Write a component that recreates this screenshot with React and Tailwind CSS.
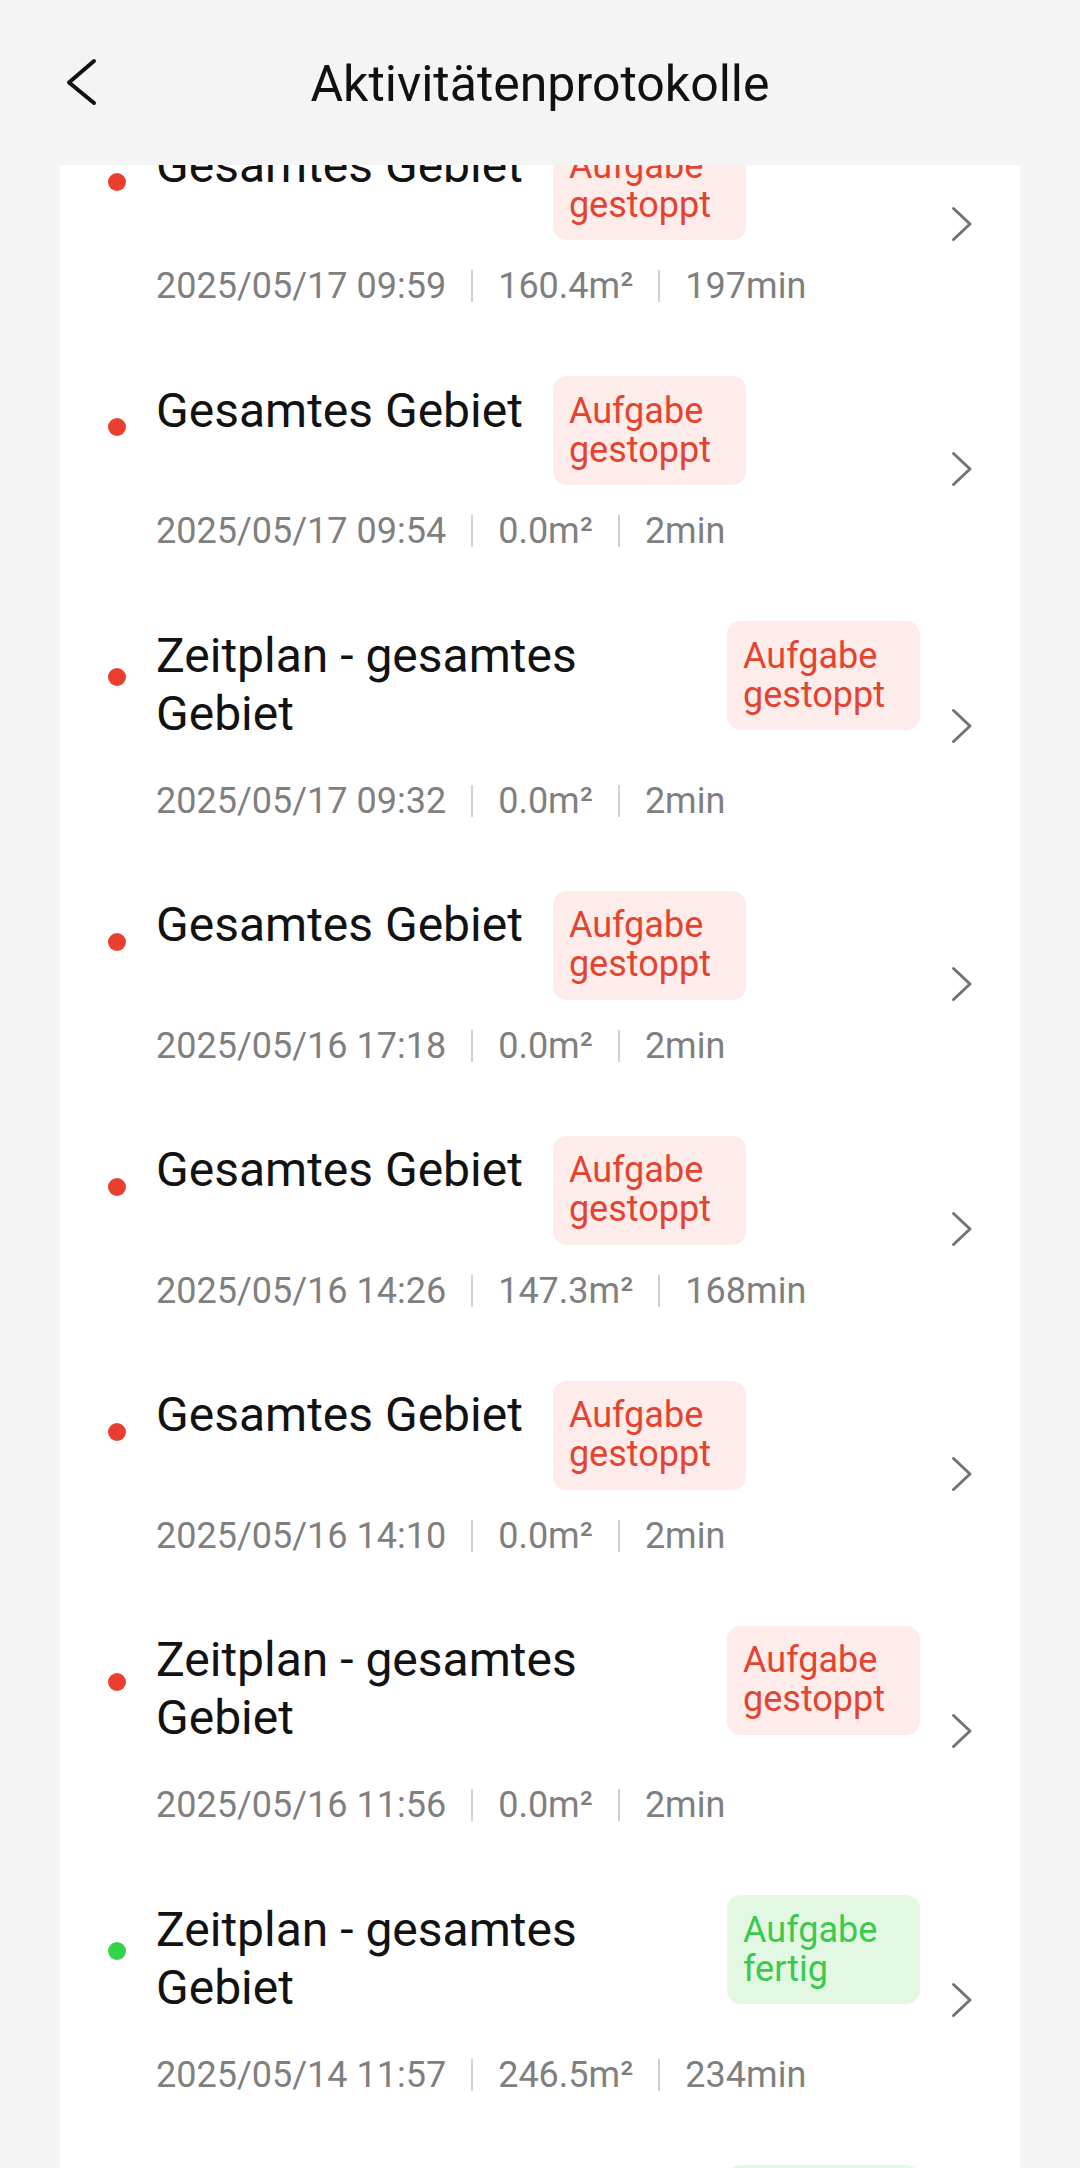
import React from "react";

const records = [
  { title: "Gesamtes Gebiet", done: false, date: "2025/05/17 09:59", area: "160.4m²", time: "197min" },
  { title: "Gesamtes Gebiet", done: false, date: "2025/05/17 09:54", area: "0.0m²", time: "2min" },
  { title: "Zeitplan - gesamtes Gebiet", wrap: true, done: false, date: "2025/05/17 09:32", area: "0.0m²", time: "2min" },
  { title: "Gesamtes Gebiet", done: false, date: "2025/05/16 17:18", area: "0.0m²", time: "2min" },
  { title: "Gesamtes Gebiet", done: false, date: "2025/05/16 14:26", area: "147.3m²", time: "168min" },
  { title: "Gesamtes Gebiet", done: false, date: "2025/05/16 14:10", area: "0.0m²", time: "2min" },
  { title: "Zeitplan - gesamtes Gebiet", wrap: true, done: false, date: "2025/05/16 11:56", area: "0.0m²", time: "2min" },
  { title: "Zeitplan - gesamtes Gebiet", wrap: true, done: true, date: "2025/05/14 11:57", area: "246.5m²", time: "234min" },
  { title: "Zeitplan - gesamtes Gebiet", wrap: true, done: true, date: "2025/05/13 11:58", area: "245.9m²", time: "232min" },
];

function Separator() {
  return <span className="mx-[25px] h-[32px] w-[2px] bg-[#d0d0d0]" />;
}

function RecordRow({ item }) {
  return (
    <div className="flex items-center pl-[48px] pr-[47px]">
      <div className="flex flex-1 pt-[29.5px] pb-[39.5px]">
        <div className="w-[18px] shrink-0">
          <div
            className={`h-[18px] w-[18px] rounded-full ${item.wrap ? "mt-[47px]" : "mt-[42px]"} ${
              item.done ? "bg-[#34d34c]" : "bg-[#ea3f30]"
            }`}
          />
        </div>
        <div className="ml-[30px] flex min-w-0 flex-1 flex-col">
          <div className="flex items-start">
            <div className="mr-[30px] min-w-0 pt-[5.6px] pb-[12px] text-[48px] leading-[58px] text-[#121212]">
              {item.title}
            </div>
            <div
              className={`w-[193px] shrink-0 rounded-[14px] px-[16px] py-[15.5px] text-[36px] leading-[39px] ${
                item.done ? "bg-[#e2f8e2] text-[#3bc94e]" : "bg-[#fdecea] text-[#e3432f]"
              }`}
            >
              {item.done ? "Aufgabe fertig" : "Aufgabe gestoppt"}
            </div>
          </div>
          <div className="mt-[25px] flex items-center text-[36px] leading-[42px] text-[#7f7f7f]">
            <span>{item.date}</span>
            <Separator />
            <span>{item.area}</span>
            <Separator />
            <span>{item.time}</span>
          </div>
        </div>
      </div>
      <svg className="ml-[31px] shrink-0" width="22" height="36" viewBox="0 0 22 36" fill="none">
        <path d="M2.5 2.5 L19 18 L2.5 33.5" stroke="#737373" strokeWidth="3" strokeLinecap="round" strokeLinejoin="round" />
      </svg>
    </div>
  );
}

export default function App() {
  return (
    <div
      className="flex h-screen flex-col overflow-hidden bg-[#f4f4f4]"
      style={{ fontFamily: "Roboto, 'Noto Sans', sans-serif" }}
    >
      <header className="h-[165px] shrink-0 pt-[54px]">
        <div className="grid h-[60px] grid-cols-[1fr_auto_1fr] items-center">
          <div className="pl-[66px]">
            <svg className="-mt-[5px]" width="32" height="48" viewBox="0 0 32 48" fill="none">
              <path d="M28 3 L3 24.5 L28 45" stroke="#111111" strokeWidth="4" strokeLinecap="round" strokeLinejoin="round" />
            </svg>
          </div>
          <h1 className="text-[50px] font-normal leading-[60px] text-[#111111]">Aktivitätenprotokolle</h1>
          <div />
        </div>
      </header>
      <main className="mx-[60px] flex-1 overflow-hidden bg-white">
        <div className="-mt-[63.5px]">
          {records.map((item, i) => (
            <RecordRow key={i} item={item} />
          ))}
        </div>
      </main>
    </div>
  );
}
